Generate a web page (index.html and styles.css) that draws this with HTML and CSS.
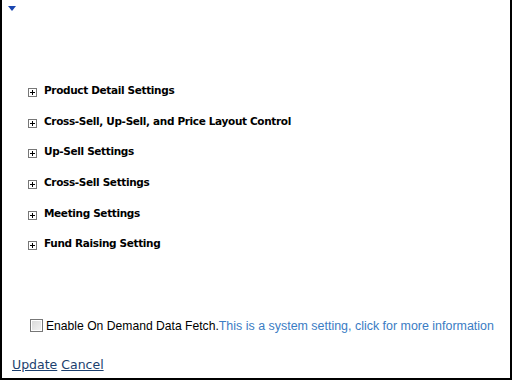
FILE: index.html
```html
<!DOCTYPE html>
<html>
<head>
<meta charset="utf-8">
<link rel="stylesheet" href="styles.css">
</head>
<body>
<div class="frame">
  <div class="top"><span class="caret"></span></div>
  <ul class="sections">
    <li><span class="plus"></span><span class="label">Product Detail Settings</span></li>
    <li><span class="plus"></span><span class="label">Cross-Sell, Up-Sell, and Price Layout Control</span></li>
    <li><span class="plus"></span><span class="label">Up-Sell Settings</span></li>
    <li><span class="plus"></span><span class="label">Cross-Sell Settings</span></li>
    <li><span class="plus"></span><span class="label">Meeting Settings</span></li>
    <li><span class="plus"></span><span class="label">Fund Raising Setting</span></li>
  </ul>
  <div class="option">
    <span class="check"></span><span class="opt-text">Enable On Demand Data Fetch.</span><span class="info">This is a system setting, click for more information</span>
  </div>
  <div class="actions"><a href="#">Update</a> <a href="#">Cancel</a></div>
</div>
</body>
</html>
```
FILE: styles.css
```css
html, body { margin: 0; padding: 0; background: #fff; }
.frame {
  box-sizing: border-box;
  width: 512px;
  height: 380px;
  border-left: 2px solid #000;
  border-right: 2px solid #000;
  border-bottom: 2px solid #000;
  position: relative;
  font-family: "DejaVu Sans", Tahoma, sans-serif;
}
.top { height: 14px; padding: 6px 0 0 6px; box-sizing: border-box; }
.caret {
  display: block;
  width: 0; height: 0;
  border-left: 4px solid transparent;
  border-right: 4px solid transparent;
  border-top: 5px solid #1a46b0;
}
.sections { list-style: none; margin: 61px 0 0 0; padding: 0 0 0 26px; }
.sections li { display: flex; align-items: center; height: 30.6px; }
.plus {
  position: relative;
  width: 7px; height: 7px;
  border: 1px solid #777;
  margin-top: 5px;
  margin-right: 7px;
  flex: none;
}
.plus::before { content: ""; position: absolute; left: 1px; top: 3px; width: 5px; height: 1px; background: #000; }
.plus::after { content: ""; position: absolute; left: 3px; top: 1px; width: 1px; height: 5px; background: #000; }
.label { font-weight: bold; font-size: 10.5px; color: #000; letter-spacing: -0.35px; }
.option {
  display: flex; align-items: center;
  margin: 60px 0 0 28px;
  font-family: "Liberation Sans", Arial, sans-serif;
  font-size: 12px;
}
.check {
  width: 11px; height: 11px;
  border: 1px solid #777;
  background: linear-gradient(135deg, #d8d8d8, #f4f4f4);
  box-shadow: inset 0 0 0 1px #fff;
  margin-right: 3px;
}
.opt-text { color: #000; font-size: 12.15px; }
.info { color: #3a7cc4; font-size: 12.45px; }
.actions { margin: 24px 0 0 10px; font-size: 12.5px; }
.actions a { color: #1c3f6e; text-decoration: underline; }
```
